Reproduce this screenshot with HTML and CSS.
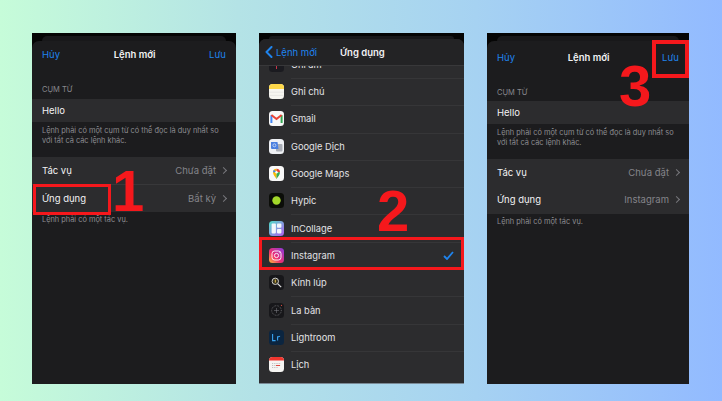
FILE: index.html
```html
<!DOCTYPE html>
<html lang="en">
<head>
  <meta charset="UTF-8" />
  <title>Lệnh mới</title>
  <link rel="stylesheet" href="styles.css">
</head>
<body>

<div class="board">

  <div class="phone phone-left">
    <div class="peek"></div>
    <div class="sheet">
      <div class="nav">
        <span class="nav-link">Hủy</span>
        <span class="nav-title">Lệnh mới</span>
        <span class="nav-link">Lưu</span>
      </div>
      <div class="caption">CỤM TỪ</div>
      <div class="row row-single">Hello</div>
      <p class="note">Lệnh phải có một cụm từ có thể đọc là duy nhất so<br>với tất cả các lệnh khác.</p>
      <div class="group">
        <div class="row">Tác vụ <span class="value">Chưa đặt <i class="chev"></i></span></div>
        <div class="row">Ứng dụng <span class="value">Bất kỳ <i class="chev"></i></span></div>
      </div>
      <p class="note">Lệnh phải có một tác vụ.</p>
    </div>
    <div class="mark mark-app"></div>
    <div class="num num-1">1</div>
  </div>

  <div class="phone phone-mid">
    <div class="peek"></div>
    <div class="sheet sheet-list">
      <div class="nav nav-list">
        <span class="nav-link back">
          <svg width="8" height="12" viewBox="0 0 8 12"><path d="M6.5 1 1.500 6l5 5" fill="none" stroke="#1f84ee" stroke-width="2" stroke-linecap="round" stroke-linejoin="round"/></svg>
          Lệnh mới
        </span>
        <span class="nav-title">Ứng dụng</span>
      </div>
      <div class="list">
        <div class="app app-cut">
          <svg class="icon" viewBox="0 0 15 15"><rect width="15" height="15" rx="3.5" fill="#1b1b20"/><path d="M7.500 6v6" stroke="#c8354a" stroke-width="1"/></svg>
          <span>Ghi âm</span>
        </div>
        <div class="app">
          <svg class="icon" viewBox="0 0 15 15"><rect width="15" height="15" rx="3.5" fill="#f6f5f0"/><path d="M0 5V3.500A3.500 3.500 0 0 1 3.500 0h8A3.500 3.500 0 0 1 15 3.500V5z" fill="#fdd84a"/><path d="M0 8.200h15M0 11.400h15" stroke="#d8d8d4" stroke-width=".5"/></svg>
          <span>Ghi chú</span>
        </div>
        <div class="app">
          <svg class="icon" viewBox="0 0 15 15"><rect width="15" height="15" rx="3.5" fill="#f8f8f8"/><path d="M2.400 12V4.200" stroke="#4285f4" stroke-width="2"/><path d="M12.600 12V4.200" stroke="#34a853" stroke-width="2"/><path d="M2.400 4 7.500 8 12.600 4" fill="none" stroke="#ea4335" stroke-width="2"/></svg>
          <span>Gmail</span>
        </div>
        <div class="app">
          <svg class="icon" viewBox="0 0 15 15"><rect width="15" height="15" rx="3.5" fill="#eef0f4"/><rect x="7" y="5" width="6.5" height="7.5" rx="1" fill="#a9adb6"/><path d="M2 3h6.500l1 7H3a1 1 0 0 1-1-1z" fill="#4a7fe0"/><circle cx="5.400" cy="6.300" r="1.500" fill="none" stroke="#dfe8fb" stroke-width=".7"/></svg>
          <span>Google Dịch</span>
        </div>
        <div class="app">
          <svg class="icon" viewBox="0 0 15 15"><rect width="15" height="15" rx="3.5" fill="#f8f8f8"/><path d="M7.500 13C6 10.600 4 9 4 6.300A3.500 3.500 0 0 1 7.500 2.700z" fill="#fbbc04"/><path d="M7.500 2.700A3.500 3.500 0 0 1 11 6.300H7.500z" fill="#ea4335"/><path d="M4 6.300a3.500 3.500 0 0 1 1-2.500l2.500 2.500z" fill="#4285f4"/><path d="M7.500 13C9 10.600 11 9 11 6.300H7.500z" fill="#34a853"/><circle cx="7.500" cy="6.200" r="1.200" fill="#fff"/></svg>
          <span>Google Maps</span>
        </div>
        <div class="app">
          <svg class="icon" viewBox="0 0 15 15"><rect width="15" height="15" rx="3.5" fill="#0b0d08"/><circle cx="7.500" cy="7.500" r="4.200" fill="#a3d82a"/></svg>
          <span>Hypic</span>
        </div>
        <div class="app">
          <svg class="icon" viewBox="0 0 15 15"><defs><linearGradient id="ic" x1="0" y1="0" x2="1" y2="1"><stop offset="0" stop-color="#4fe0c8"/><stop offset="1" stop-color="#b25cf0"/></linearGradient></defs><rect width="15" height="15" rx="3.5" fill="url(#ic)"/><rect x="2.600" y="2.600" width="4.300" height="9.800" rx=".8" fill="#f2f6fb"/><rect x="8" y="2.600" width="4.400" height="4.200" rx=".8" fill="#f2f6fb"/><rect x="8" y="7.900" width="4.400" height="4.500" rx=".8" fill="#f2f6fb"/></svg>
          <span>InCollage</span>
        </div>
        <div class="app">
          <svg class="icon" viewBox="0 0 15 15"><defs><linearGradient id="ig" x1="0" y1="1" x2="1" y2="0"><stop offset="0" stop-color="#fdc43c"/><stop offset=".4" stop-color="#ef2f6f"/><stop offset="1" stop-color="#8a3ae0"/></linearGradient></defs><rect width="15" height="15" rx="3.5" fill="url(#ig)"/><rect x="3" y="3" width="9" height="9" rx="2.600" fill="none" stroke="#fff" stroke-width=".9"/><circle cx="7.500" cy="7.500" r="2.100" fill="none" stroke="#fff" stroke-width=".9"/><circle cx="10.300" cy="4.700" r=".55" fill="#fff"/></svg>
          <span>Instagram</span>
          <svg class="check" width="11" height="9" viewBox="0 0 11 9"><path d="M1 5l3 3 6-7" fill="none" stroke="#1f84ee" stroke-width="1.800"/></svg>
        </div>
        <div class="app">
          <svg class="icon" viewBox="0 0 15 15"><rect width="15" height="15" rx="3.5" fill="#17171a"/><circle cx="6.300" cy="6.300" r="3.200" fill="#3a3520" stroke="#e0e0e0" stroke-width=".9"/><path d="M6.300 4.600v3" stroke="#e3c14a" stroke-width="1"/><path d="M8.800 8.800l3.400 3.400" stroke="#e0e0e0" stroke-width="1.200"/></svg>
          <span>Kính lúp</span>
        </div>
        <div class="app">
          <svg class="icon" viewBox="0 0 15 15"><rect width="15" height="15" rx="3.5" fill="#17171a"/><circle cx="7.500" cy="7.500" r="4.800" fill="none" stroke="#77777a" stroke-width=".9" stroke-dasharray=".7 .9"/><path d="M7.500 5v5M5 7.500h5" stroke="#85858a" stroke-width=".5"/><circle cx="12.500" cy="2.400" r=".6" fill="#d0483c"/></svg>
          <span>La bàn</span>
        </div>
        <div class="app">
          <svg class="icon" viewBox="0 0 15 15"><rect width="15" height="15" rx="3.5" fill="#0b2540"/><path d="M3.600 4v6.600h3M8.600 10.600V6.200M8.600 7.600c.5-1 1.300-1.400 2.500-1.400" fill="none" stroke="#39a4f0" stroke-width="1.100"/></svg>
          <span>Lightroom</span>
        </div>
        <div class="app">
          <svg class="icon" viewBox="0 0 15 15"><rect width="15" height="15" rx="3.5" fill="#f6f5f3"/><path d="M0 3.600V3.500A3.500 3.500 0 0 1 3.500 0h8A3.500 3.500 0 0 1 15 3.500v.1z" fill="#f0362e"/><path d="M3 6.500h9M3 8.500h9M3 10.500h6" stroke="#aaa" stroke-width=".7" stroke-dasharray="1 .8"/><path d="M7 8.500h4" stroke="#e0392f" stroke-width=".9"/></svg>
          <span>Lịch</span>
        </div>
      </div>
    </div>
    <div class="mark mark-insta"></div>
    <div class="num num-2">2</div>
  </div>

  <div class="phone phone-right">
    <div class="peek"></div>
    <div class="sheet sheet-low">
      <div class="nav">
        <span class="nav-link">Hủy</span>
        <span class="nav-title">Lệnh mới</span>
        <span class="nav-link">Lưu</span>
      </div>
      <div class="caption">CỤM TỪ</div>
      <div class="row row-single">Hello</div>
      <p class="note">Lệnh phải có một cụm từ có thể đọc là duy nhất so<br>với tất cả các lệnh khác.</p>
      <div class="group">
        <div class="row">Tác vụ <span class="value">Chưa đặt <i class="chev"></i></span></div>
        <div class="row">Ứng dụng <span class="value">Instagram <i class="chev"></i></span></div>
      </div>
      <p class="note">Lệnh phải có một tác vụ.</p>
    </div>
    <div class="mark mark-save"></div>
    <div class="num num-3">3</div>
  </div>

</div>

</body>
</html>
```

FILE: styles.css
```css
* {
  box-sizing: border-box;
}

html, body {
  height: 100%;
}

body {
  margin: 0;
  overflow: hidden;
  font-family: 'Inter', 'Liberation Sans', sans-serif;
  background: linear-gradient(90deg, #c6fcd9 0%, #b4e3e6 33%, #a6d2f2 66%, #92baff 100%);
}

.board {
  display: flex;
  gap: 23px;
  padding: 33px 0 0 32px;
}

.phone {
  position: relative;
  display: flex;
  flex-direction: column;
  width: 204px;
  height: 351px;
  padding-top: 3px;
  background: #050505;
  overflow: hidden;
}

.phone-right {
  width: 202px;
}

.phone-mid {
  width: 205px;
  border-bottom: 1px solid #7a8a96;
}

.peek {
  flex: none;
  height: 5px;
  margin: 0 10px;
  border-radius: 6px 6px 0 0;
  background: #18181a;
}

.phone-mid .peek {
  height: 3px;
}

.sheet {
  flex: 1;
  min-height: 0;
  border-radius: 7px 7px 0 0;
  background: #1c1c1e;
  color: #f2f2f4;
  font-size: 9.5px;
}

.nav {
  display: flex;
  justify-content: space-between;
  align-items: center;
  height: 26px;
  padding: 0 10px;
  margin-bottom: 17px;
}

.sheet-low .nav {
  margin-top: 3px;
}

.nav-link {
  color: #1f84ee;
}

.nav-title {
  font-weight: 600;
}

.caption {
  padding: 0 10px;
  margin-bottom: 4px;
  font-size: 7.5px;
  line-height: 11px;
  color: #88888d;
}

.sheet-low .caption {
  margin-bottom: 3px;
}

.row {
  display: flex;
  justify-content: space-between;
  align-items: center;
  height: 27.5px;
  padding: 0 10px;
  background: #2c2c2e;
}

.row-single {
  height: 23px;
}

.note {
  margin: 3.5px 0 9px;
  padding: 0 10px;
  font-size: 7.4px;
  line-height: 10px;
  color: #8c8c91;
}

.group {
  margin-top: 11px;
}

.phone-left .group .row + .row {
  border-top: 1px solid #38383a;
}

.value {
  display: flex;
  align-items: center;
  gap: 5px;
  color: #85858a;
}

.chev {
  width: 5px;
  height: 5px;
  border-top: 1px solid #77777c;
  border-right: 1px solid #77777c;
  transform: rotate(45deg);
}

.sheet-list {
  background: #2c2c2e;
  display: flex;
  flex-direction: column;
}

.nav-list {
  flex: none;
  justify-content: flex-start;
  gap: 23px;
  height: 27px;
  margin-bottom: 0;
  padding: 0 6px;
  background: #232325;
  border-bottom: 1px solid #38383a;
  border-radius: 7px 7px 0 0;
}

.back {
  display: flex;
  align-items: center;
  gap: 3px;
}

.list {
  flex: 1;
  min-height: 0;
  overflow: hidden;
}

.app {
  display: flex;
  align-items: center;
  gap: 7px;
  height: 27.3px;
  padding: 0 10px;
  position: relative;
  font-size: 9.3px;
  color: #e2e2e5;
}

.app + .app::after {
  content: "";
  position: absolute;
  left: 32px;
  right: 0;
  top: 0;
  height: 1px;
  background: #363638;
}

/* first row has scrolled under the nav bar */
.app-cut {
  margin-top: -15.3px;
}

.icon {
  width: 15px;
  height: 15px;
  flex: none;
}

.check {
  margin-left: auto;
}

/* red callouts drawn over the screenshots */
.mark {
  position: absolute;
  border: 3px solid #f5181c;
}

.mark-app {
  left: 1px;
  top: 151px;
  width: 78px;
  height: 31px;
}

.mark-insta {
  left: 0;
  top: 204px;
  width: 205px;
  height: 33px;
}

.mark-save {
  left: 165px;
  top: 7px;
  width: 37px;
  height: 38px;
  border-width: 4px;
}

.num {
  position: absolute;
  font-family: 'Liberation Sans', sans-serif;
  font-weight: 700;
  font-size: 58px;
  line-height: 42px;
  color: #f5181c;
}

.num-1 {
  left: 80px;
  top: 137px;
}

.num-2 {
  left: 118px;
  top: 157px;
}

.num-3 {
  left: 132px;
  top: 32px;
}
```
